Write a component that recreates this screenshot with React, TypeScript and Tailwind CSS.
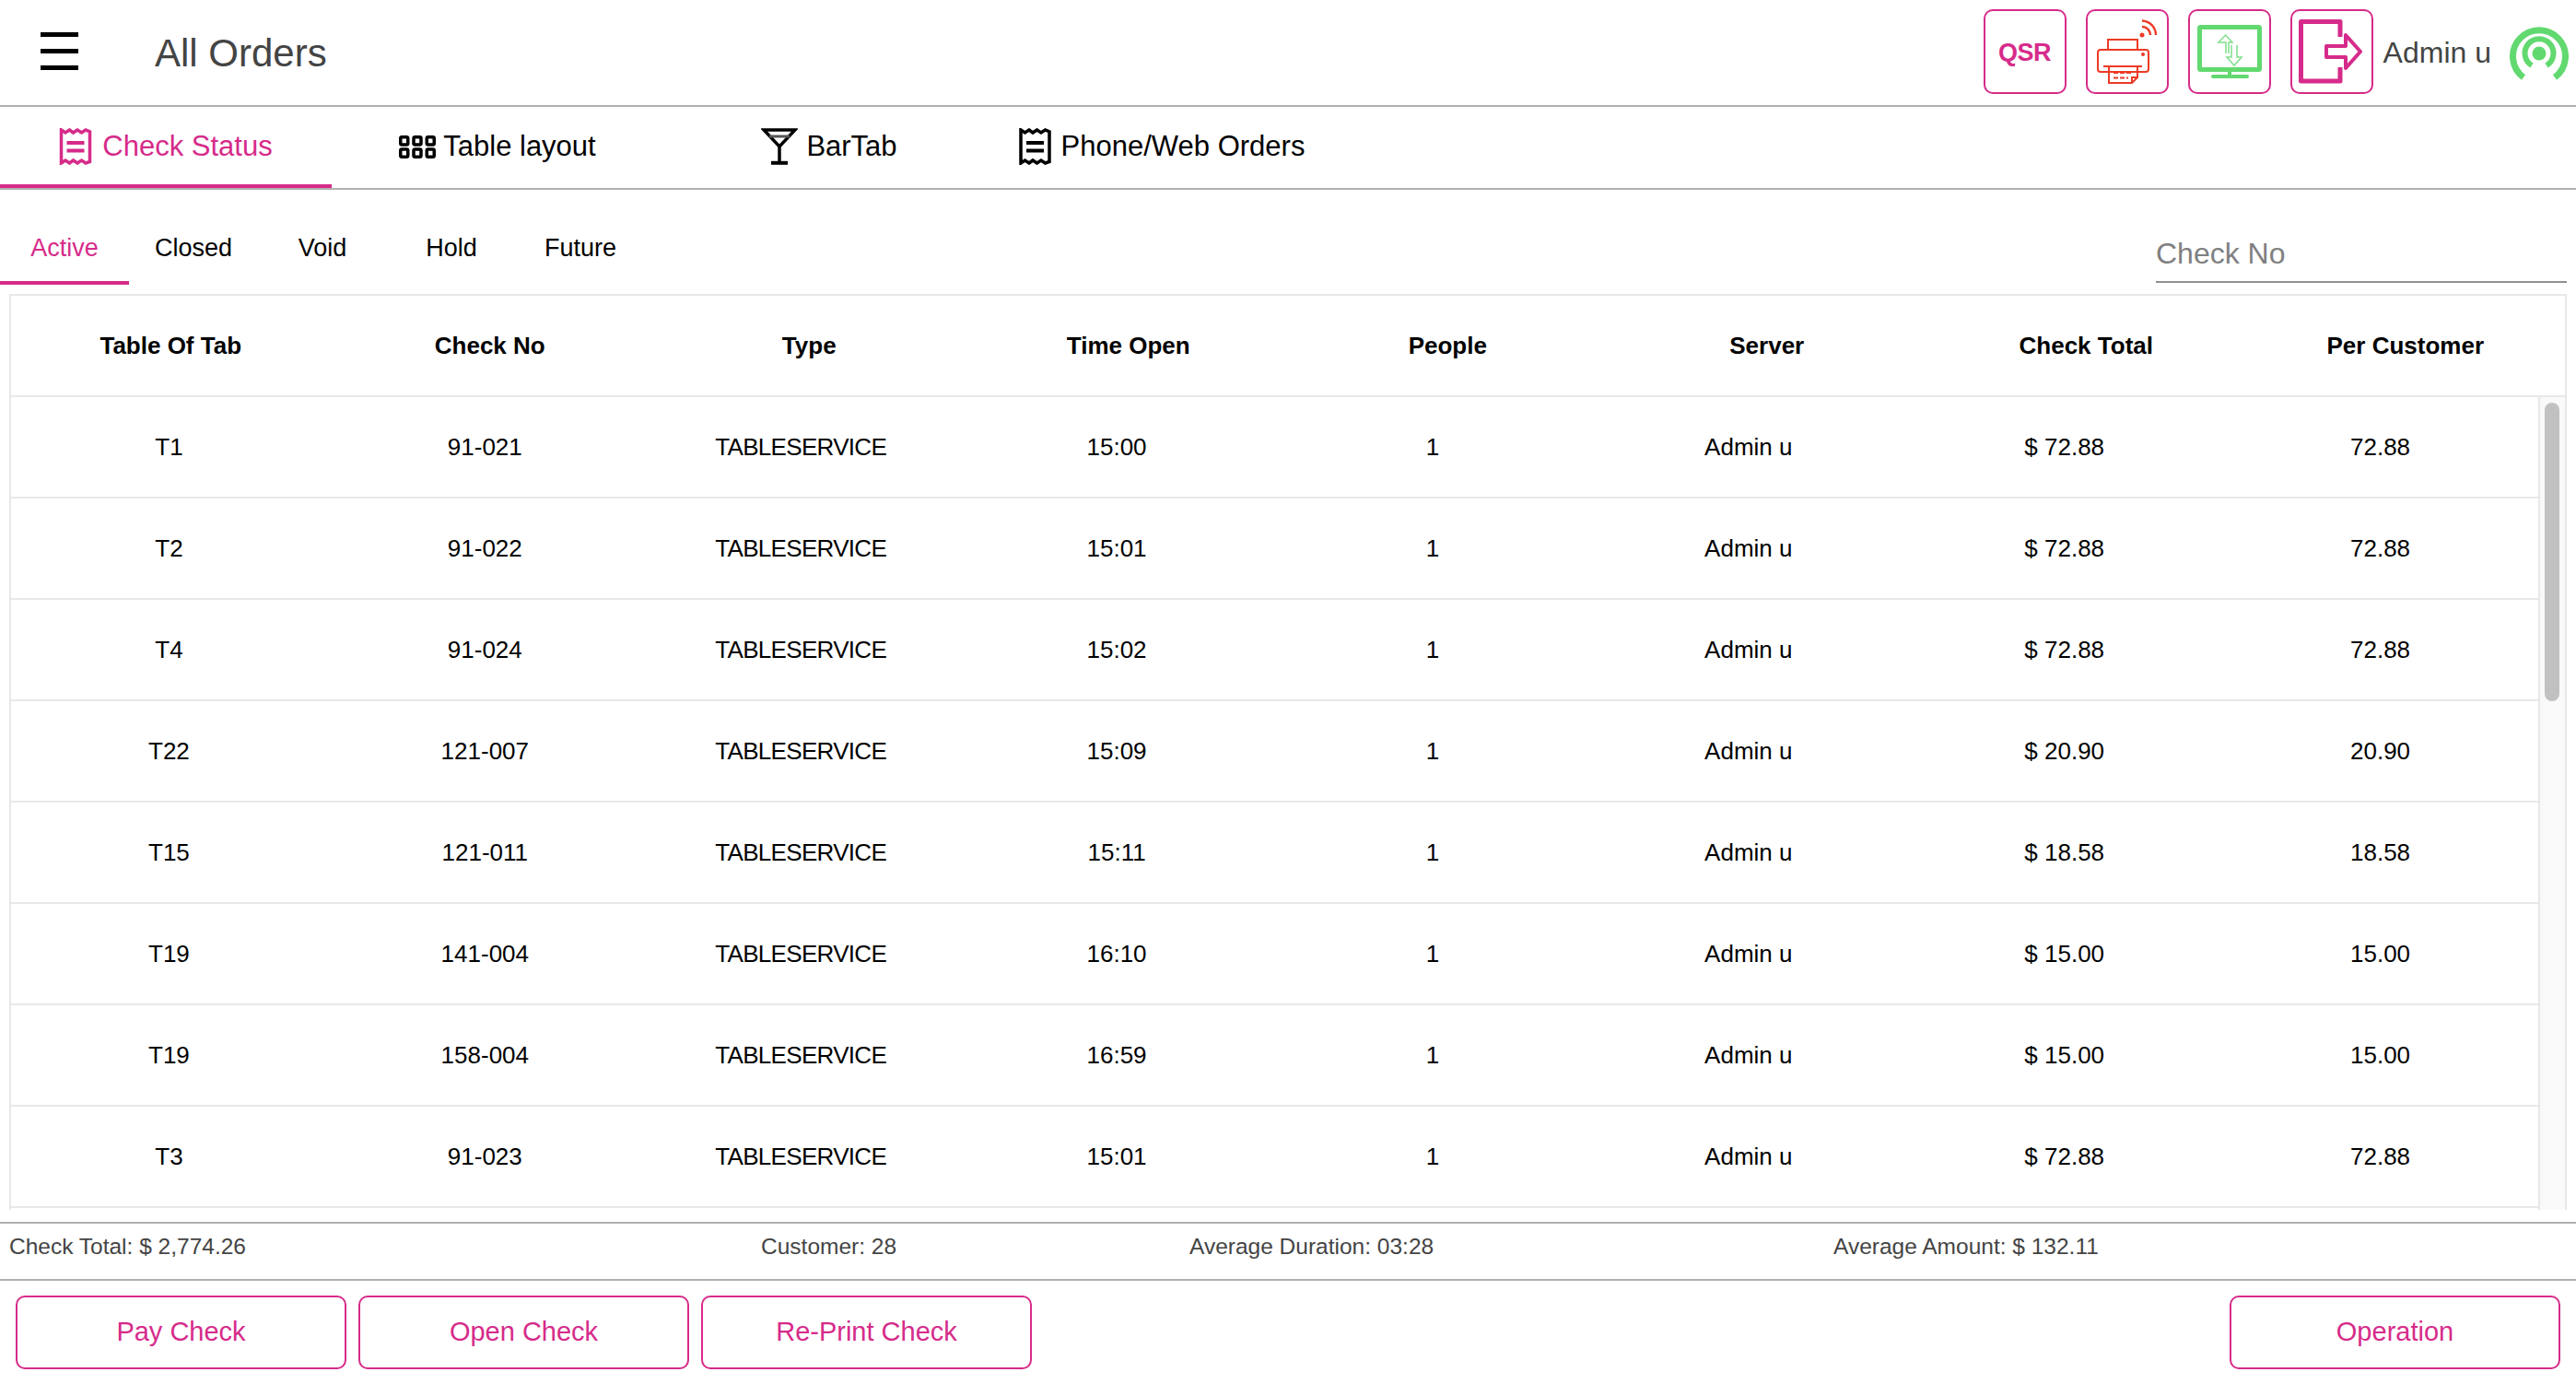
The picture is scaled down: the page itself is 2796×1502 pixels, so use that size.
const rows = [
  ['T1', '91-021', 'TABLESERVICE', '15:00', '1', 'Admin u', '$ 72.88', '72.88'],
  ['T2', '91-022', 'TABLESERVICE', '15:01', '1', 'Admin u', '$ 72.88', '72.88'],
  ['T4', '91-024', 'TABLESERVICE', '15:02', '1', 'Admin u', '$ 72.88', '72.88'],
  ['T22', '121-007', 'TABLESERVICE', '15:09', '1', 'Admin u', '$ 20.90', '20.90'],
  ['T15', '121-011', 'TABLESERVICE', '15:11', '1', 'Admin u', '$ 18.58', '18.58'],
  ['T19', '141-004', 'TABLESERVICE', '16:10', '1', 'Admin u', '$ 15.00', '15.00'],
  ['T19', '158-004', 'TABLESERVICE', '16:59', '1', 'Admin u', '$ 15.00', '15.00'],
  ['T3', '91-023', 'TABLESERVICE', '15:01', '1', 'Admin u', '$ 72.88', '72.88'],
]

const columns = ['Table Of Tab', 'Check No', 'Type', 'Time Open', 'People', 'Server', 'Check Total', 'Per Customer']
const subTabs = ['Active', 'Closed', 'Void', 'Hold', 'Future']

function ReceiptIcon({ className }: { className: string }) {
  return (
    <svg className={className} viewBox="0 0 35 40" fill="none" stroke="currentColor">
      <path
        strokeWidth="3.500"
        d="M2 2 L6.5 5 L11 2 L15 5 L19.5 2 L24 5 L28.5 2 L33 4 V36.500 L28.500 38 L24 35 L19.500 38 L15 35 L11 38 L6.500 35 L2 38 Z"
      />
      <path strokeWidth="4" d="M8 16 H27 M8 24.500 H27" />
    </svg>
  )
}

function GridIcon() {
  return (
    <svg className="w-[40px] h-[25px]" viewBox="0 0 40 25" fill="none" stroke="black" strokeWidth="3.500">
      {[1.75, 16, 30.25].map((x) =>
        [1.75, 15].map((y) => <rect key={`${x}-${y}`} x={x} y={y} width="8" height="8.250" rx="1.500" />)
      )}
    </svg>
  )
}

function MartiniIcon() {
  return (
    <svg className="w-[40px] h-[40px]" viewBox="0 0 40 40" fill="none" stroke="black">
      <path strokeWidth="3.500" d="M3 2 H37 L20 20 Z" />
      <path strokeWidth="3" stroke="#555" d="M9 9 H31" />
      <path strokeWidth="3.500" d="M20 20 V37" />
      <path strokeWidth="4" d="M11 37.800 H29" />
    </svg>
  )
}

function PrinterIcon() {
  return (
    <svg className="w-[65px] h-[70px]" viewBox="0 0 65 70" fill="none" stroke="#ec3b26" strokeWidth="2">
      <path d="M12 33 V22 H44 V33" />
      <rect x="1" y="33" width="55" height="24" rx="3" />
      <path d="M7 51 H49" />
      <path d="M13 51 V69 H38 L44 63 V51 M38 69 V63 H44" />
      <path strokeDasharray="5 2" d="M18 58 H39 M18 63.500 H34" />
      <circle cx="50" cy="38" r="1" fill="#ec3b26" />
      <circle cx="49" cy="17" r="2.500" fill="#ec3b26" stroke="none" />
      <path d="M49 8 A9 9 0 0 1 58 17" strokeWidth="2.500" />
      <path d="M49 1.500 A15.500 15.500 0 0 1 64 17" strokeWidth="2.500" />
    </svg>
  )
}

function MonitorIcon() {
  return (
    <svg className="w-[70px] h-[58px]" viewBox="0 0 70 58" fill="none" stroke="#62d96f">
      <rect x="2.500" y="2.500" width="65" height="46" rx="1" strokeWidth="5" />
      <path strokeWidth="4" d="M35 50 V55" />
      <path strokeWidth="4" strokeLinecap="round" d="M17 56 H54" />
      <path strokeWidth="1.500" stroke="#7fe08a" d="M31 31 V19 H23 L30.500 11 L38 19 H34 V31 M37 22 V35 H32 L40 44 L48 35 H43 V22" />
    </svg>
  )
}

function ExitIcon() {
  return (
    <svg className="w-[71px] h-[70px]" viewBox="0 0 71 70" fill="none" stroke="#d62b8a" strokeWidth="5" strokeLinejoin="round">
      <path d="M45 19 V2.500 H2.500 V67 H45 V52" />
      <path strokeWidth="4" d="M30 29 H51 V17 L67 35 L51 53 V41 H30 Z" />
    </svg>
  )
}

function SignalIcon() {
  return (
    <svg className="w-[64px] h-[60px]" viewBox="0 0 64 60" fill="none" stroke="#62d96f">
      <circle cx="32" cy="31" r="7.500" fill="#62d96f" stroke="none" />
      <path strokeWidth="6" d="M24 44 A15.500 15.500 0 1 1 40 44" />
      <path strokeWidth="7" d="M15 57 A28.500 28.500 0 1 1 49 57" />
    </svg>
  )
}

function TopButton({ children }: { children: React.ReactNode }) {
  return (
    <button className="w-[90px] h-[92px] flex items-center justify-center border-2 border-[#d62b8a] rounded-[10px]">
      {children}
    </button>
  )
}

function ActionButton({ label }: { label: string }) {
  return (
    <button className="w-[359px] h-[80px] border-2 border-[#d62b8a] rounded-[10px] text-[29px] text-[#d62b8a]">
      {label}
    </button>
  )
}

export default function App() {
  return (
    <div className="w-[2796px] h-[1502px] bg-white flex flex-col overflow-hidden font-['Liberation_Sans',Arial,sans-serif]">
      {/* header */}
      <header className="h-[116px] shrink-0 border-b-2 border-[#b0b0b0] flex items-center">
        <button className="ml-[44px] w-[41px] h-[41px] flex flex-col justify-between mb-[4px]">
          <span className="block h-[5px] bg-black" />
          <span className="block h-[5px] bg-black" />
          <span className="block h-[5px] bg-black" />
        </button>
        <h1 className="ml-[83px] text-[42px] text-[#444444] font-normal">All Orders</h1>
        <div className="ml-auto flex items-center gap-[21px] mb-[2px]">
          <TopButton>
            <span className="pt-[2px] text-[27px] font-bold text-[#d62b8a] tracking-[-0.5px]">QSR</span>
          </TopButton>
          <TopButton>
            <PrinterIcon />
          </TopButton>
          <TopButton>
            <MonitorIcon />
          </TopButton>
          <TopButton>
            <ExitIcon />
          </TopButton>
        </div>
        <span className="ml-[11px] text-[32px] text-[#444444]">Admin u</span>
        <div className="ml-[20px] mr-[8px]">
          <SignalIcon />
        </div>
      </header>

      {/* main tabs */}
      <nav className="h-[90px] shrink-0 border-b-2 border-[#b0b0b0] flex text-[31px]">
        <button className="w-[360px] h-[88px] pt-[2px] border-b-4 border-[#d62b8a] flex items-center justify-center gap-[11px] text-[#d62b8a]">
          <ReceiptIcon className="w-[36px] h-[40px]" />
          <span>Check Status</span>
        </button>
        <button className="w-[360px] h-[88px] pb-[2px] flex items-center justify-center gap-[8px] text-black">
          <GridIcon />
          <span>Table layout</span>
        </button>
        <button className="w-[360px] h-[88px] pb-[2px] flex items-center justify-center gap-[9px] text-black">
          <MartiniIcon />
          <span>BarTab</span>
        </button>
        <button className="w-[360px] h-[88px] pb-[2px] pl-[2px] flex items-center justify-center gap-[11px] text-black">
          <ReceiptIcon className="w-[35px] h-[40px]" />
          <span>Phone/Web Orders</span>
        </button>
      </nav>

      {/* sub tabs */}
      <div className="h-[113px] shrink-0 flex">
        {subTabs.map((t, i) => (
          <button
            key={t}
            className={
              i === 0
                ? 'w-[140px] h-[103px] pt-[27px] border-b-4 border-[#d62b8a] text-[27px] text-[#d62b8a]'
                : 'w-[140px] h-[103px] pt-[23px] text-[27px] text-black'
            }
          >
            {t}
          </button>
        ))}
        <div className="ml-auto mr-[10px] w-[446px] h-[101px] border-b-2 border-[#909090] flex items-end pb-[10px]">
          <span className="text-[32px] leading-[40px] text-[#808080]">Check No</span>
        </div>
      </div>

      {/* table */}
      <div className="ml-[10px] mr-[10px] h-[994px] shrink-0 border-x-2 border-t-2 border-[#e8e8e8] overflow-hidden flex flex-col">
        <div className="h-[110px] shrink-0 grid grid-cols-8 items-center border-b-2 border-[#e8e8e8] text-[26px] font-bold text-black text-center">
          {columns.map((c) => (
            <div key={c}>{c}</div>
          ))}
        </div>
        <div className="flex-1 flex min-h-0">
          <div className="flex-1 min-w-0">
            {rows.map((r, i) => (
              <div key={i} className="h-[110px] grid grid-cols-8 items-center border-b-2 border-[#e8e8e8] text-[26px] text-black text-center">
                {r.map((v, j) => (
                  <div key={j} className={j === 2 ? 'tracking-[-0.7px]' : ''}>
                    {v}
                  </div>
                ))}
              </div>
            ))}
          </div>
          <div className="w-[29px] shrink-0 bg-[#f9f9f9] border-l-2 border-[#e8e8e8] pl-[5px] pt-[6px]">
            <div className="w-[16px] h-[324px] rounded-full bg-[#c1c1c1]" />
          </div>
        </div>
      </div>

      {/* totals */}
      <div className="mt-[13px] h-[64px] shrink-0 border-y-2 border-[#b0b0b0] flex items-center pb-[9px] text-[24.500px] text-[#444444]">
        <span className="w-[826px] pl-[10px]">Check Total: $ 2,774.26</span>
        <span className="w-[465px]">Customer: 28</span>
        <span className="w-[699px]">Average Duration: 03:28</span>
        <span>Average Amount: $ 132.11</span>
      </div>

      {/* actions */}
      <div className="flex gap-[13px] px-[17px] mt-[16px]">
        <ActionButton label="Pay Check" />
        <ActionButton label="Open Check" />
        <ActionButton label="Re-Print Check" />
        <div className="ml-auto">
          <ActionButton label="Operation" />
        </div>
      </div>
    </div>
  )
}
